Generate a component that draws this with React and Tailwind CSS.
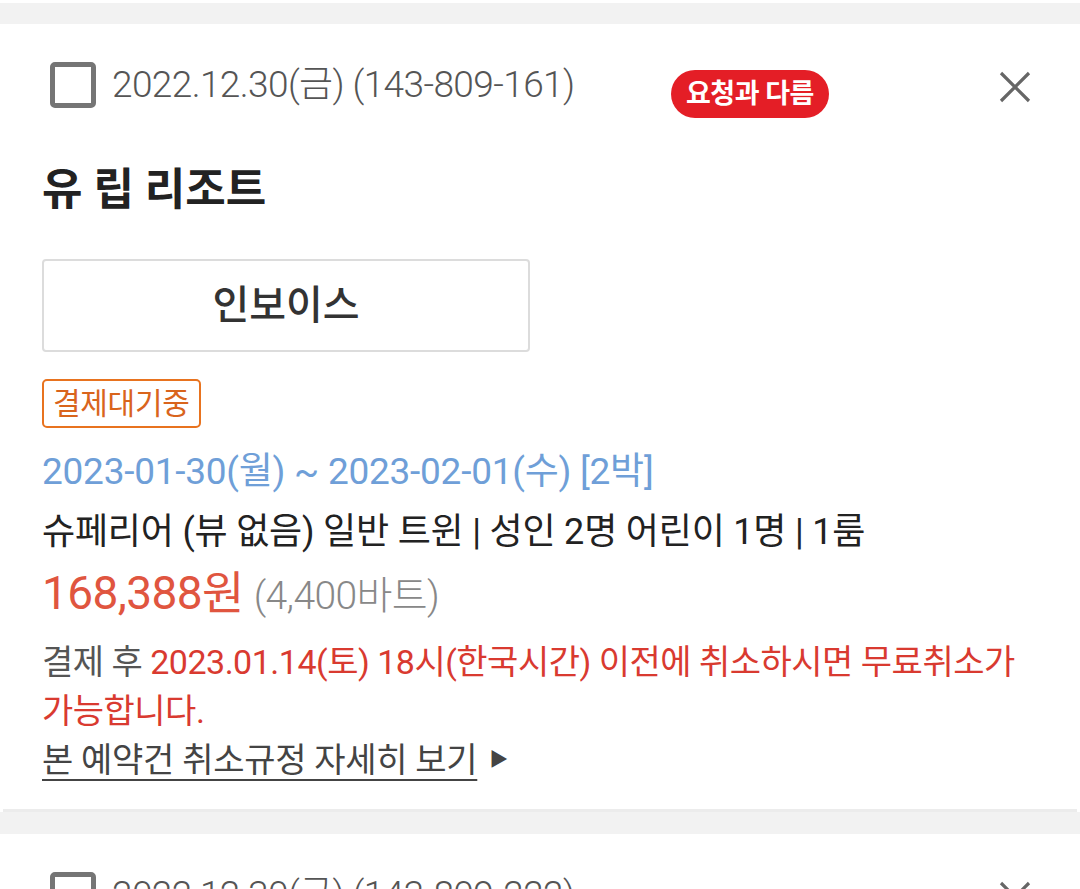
import React from "react";

const font = { fontFamily: "Roboto, 'Noto Sans CJK KR', sans-serif" };

const Checkbox = () => (
  <div className="w-[46px] h-[46px] border-[5px] border-[#757575] rounded-[5px] shrink-0" />
);

const CloseIcon = () => (
  <svg width="32" height="32" viewBox="0 0 32 32" className="shrink-0">
    <path d="M2 2 L30 30 M30 2 L2 30" stroke="#666" strokeWidth="3.2" fill="none" />
  </svg>
);

const BookingCard = ({ booking, partial }) => (
  <div className="bg-white px-[42px]">
    <div className="flex items-start pt-[38px]">
      <div className="ml-[8px]">
        <Checkbox />
      </div>
      <span className="ml-[16px] text-[37px] font-light text-[#555] tracking-[-0.6px] leading-[46px] whitespace-nowrap">
        {booking.orderedAt} ({booking.orderNo})
      </span>
      <div className="flex-1" />
      {!partial && (
        <span className="mt-[8px] h-[48px] w-[158px] rounded-full bg-[#e41e26] text-white text-[27px] font-bold flex items-center justify-center tracking-[-0.5px]">
          {booking.flag}
        </span>
      )}
      <div className="w-[170px]" />
      <div className="mr-[7px] mt-[9px]">
        <CloseIcon />
      </div>
    </div>

    {!partial && (
      <>
        <h2 className="mt-[46px] text-[44px] font-bold text-[#222] leading-[52px]">
          {booking.hotel}
        </h2>

        <button className="mt-[43px] w-[488px] h-[93px] border-2 border-[#dcdcdc] rounded-[4px] bg-white text-[40px] font-medium text-[#333] flex items-center justify-center">
          인보이스
        </button>

        <div className="mt-[27px] inline-flex items-center h-[49px] px-[9px] border-2 border-[#e8731f] rounded-[5px] text-[30px] text-[#d9641c] leading-none tracking-[-0.3px]">
          {booking.status}
        </div>

        <p className="mt-[19px] text-[37px] text-[#6f9fd8] leading-[50px] tracking-[-0.25px] whitespace-nowrap">
          {booking.period}
        </p>
        <p className="mt-[10px] text-[36px] text-[#222] leading-[50px] tracking-[-0.2px] whitespace-nowrap">
          {booking.room}
        </p>
        <p className="mt-[10px] leading-[52px] tracking-[-0.6px] whitespace-nowrap">
          <span className="text-[46px] text-[#e0553f]">{booking.price}</span>
          <span className="ml-[10px] text-[39px] text-[#888] font-light">{booking.priceLocal}</span>
        </p>
        <p className="mt-[8px] text-[34px] leading-[49px] tracking-[-0.5px] text-[#d93a30] whitespace-nowrap">
          <span className="text-[#555]">결제 후 </span>
          {booking.cancelNote}
          <br />
          {booking.cancelNote2}
        </p>
        <div className="flex items-center pb-[24px]">
          <a className="text-[34px] leading-[49px] tracking-[-0.3px] text-[#444] underline underline-offset-[7px] decoration-[2px] whitespace-nowrap">
            본 예약건 취소규정 자세히 보기
          </a>
          <span className="ml-[12px] text-[19px] text-[#444]">▶</span>
        </div>
      </>
    )}
  </div>
);

const bookings = [
  {
    orderedAt: "2022.12.30(금)",
    orderNo: "143-809-161",
    flag: "요청과 다름",
    hotel: "유 립 리조트",
    status: "결제대기중",
    period: "2023-01-30(월) ~ 2023-02-01(수) [2박]",
    room: "슈페리어 (뷰 없음) 일반 트윈 | 성인 2명 어린이 1명 | 1룸",
    price: "168,388원",
    priceLocal: "(4,400바트)",
    cancelNote: "2023.01.14(토) 18시(한국시간) 이전에 취소하시면 무료취소가",
    cancelNote2: "가능합니다.",
  },
  {
    orderedAt: "2022.12.30(금)",
    orderNo: "143-809-222",
  },
];

export default function App() {
  return (
    <div className="w-[1080px] h-[889px] overflow-hidden bg-[#f2f2f2]" style={font}>
      <div className="h-[3px] bg-white" />
      <div className="h-[21px]" />
      <BookingCard booking={bookings[0]} />
      <div className="h-[3px] bg-white px-[3px]">
        <div className="h-[3px] bg-[#ececec]" />
      </div>
      <div className="h-[22px]" />
      <BookingCard booking={bookings[1]} partial />
    </div>
  );
}
